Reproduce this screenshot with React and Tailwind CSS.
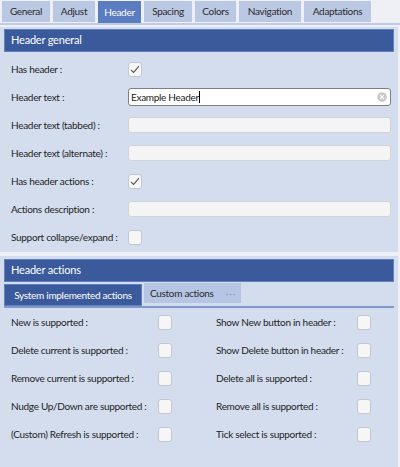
import React from 'react';

const tabs = [
  { label: 'General', w: 'w-[48px]' },
  { label: 'Adjust', w: 'w-[42px]' },
  { label: 'Header', w: 'w-[43px]', active: true },
  { label: 'Spacing', w: 'w-[48px]' },
  { label: 'Colors', w: 'w-[41px]' },
  { label: 'Navigation', w: 'w-[62px]' },
  { label: 'Adaptations', w: 'w-[67px]' },
];

function Check({ checked }) {
  return (
    <div className="w-[14px] h-[15px] rounded-[3px] border border-[#c3c7cf] bg-[#f6f6f6] flex items-center justify-center">
      {checked && (
        <svg width="10" height="9" viewBox="0 0 10 9" fill="none">
          <path d="M1 4.8 L3.6 7.4 L9 1.2" stroke="#555" strokeWidth="1.1" />
        </svg>
      )}
    </div>
  );
}

function Field({ value }) {
  if (value) {
    return (
      <div className="w-[263px] h-[18px] rounded-[3px] border border-[#7b7f87] bg-white flex items-center pl-[2px] pr-[3px]">
        <span className="text-[#222]">{value}</span>
        <span className="w-px h-[12px] bg-black" />
        <div className="flex-1" />
        <svg width="10" height="10" viewBox="0 0 10 10">
          <circle cx="5" cy="5" r="4.8" fill="#c9c9c9" />
          <path d="M3.2 3.2 L6.8 6.8 M6.8 3.2 L3.2 6.8" stroke="#fff" strokeWidth="1.1" />
        </svg>
      </div>
    );
  }
  return <div className="w-[263px] h-[16px] rounded-[3px] border border-[#d0d3da] bg-[#f4f4f4]" />;
}

function Bar({ title }) {
  return (
    <div className="mx-[4px] h-[23px] bg-[#3a5a9b] border border-[#5f7fbf] flex items-center pl-[6px] text-white text-[11px] tracking-[-0.2px]">
      {title}
    </div>
  );
}

const general = [
  { label: 'Has header :', type: 'check', checked: true },
  { label: 'Header text :', type: 'field', value: 'Example Header' },
  { label: 'Header text (tabbed) :', type: 'field' },
  { label: 'Header text (alternate) :', type: 'field' },
  { label: 'Has header actions :', type: 'check', checked: true },
  { label: 'Actions description :', type: 'field' },
  { label: 'Support collapse/expand :', type: 'check' },
];

const actions = [
  ['New is supported :', 'Show New button in header :'],
  ['Delete current is supported :', 'Show Delete button in header :'],
  ['Remove current is supported :', 'Delete all is supported :'],
  ['Nudge Up/Down are supported :', 'Remove all is supported :'],
  ['(Custom) Refresh is supported :', 'Tick select is supported :'],
];

export default function App() {
  return (
    <div className="w-[400px] h-[467px] overflow-hidden bg-[#eef0f6] text-[10px] tracking-[-0.3px] whitespace-nowrap text-[#1e1e1e] font-['Lato',sans-serif]">
      {/* top tabs */}
      <div className="h-[25px] flex items-end gap-[3px] pl-[2px] border-b-2 border-[#c0cce6]">
        {tabs.map(t => (
          <div
            key={t.label}
            className={
              t.active
                ? `${t.w} h-[22px] bg-[#5a7cc0] text-white flex items-center justify-center`
                : `${t.w} h-[21px] mb-[1px] bg-[#bac8e4] text-[#2a2a2a] flex items-center justify-center`
            }
          >
            {t.label}
          </div>
        ))}
      </div>

      {/* Header general */}
      <div className="mt-[2px] mr-[2px] h-[225px] bg-[#d3ddee] pt-[2px]">
        <Bar title="Header general" />
        <div className="mt-[3px] pl-[11px]">
          {general.map(r => (
            <div key={r.label} className="h-[28px] flex items-center">
              <div className="w-[117px]">{r.label}</div>
              {r.type === 'check' ? <Check checked={r.checked} /> : <Field value={r.value} />}
            </div>
          ))}
        </div>
      </div>

      {/* Header actions */}
      <div className="mt-[4px] mr-[2px] h-[211px] bg-[#d3ddee] pt-[3px]">
        <Bar title="Header actions" />
        <div className="mx-[4px] mt-[1px] h-[25px] flex items-end gap-[2px] border-b-2 border-[#7f98cc]">
          <div className="w-[138px] h-[22px] bg-[#3a5a9b] border border-[#5f7fbf] text-white flex items-center justify-center">
            System implemented actions
          </div>
          <div className="w-[97px] h-[20px] mb-[3px] bg-[#b5c5e3] flex items-center pl-[6px] gap-[12px] text-[#2a2a2a]">
            Custom actions
            <span className="text-[#8a97b5] tracking-[1px]">···</span>
          </div>
        </div>
        <div className="pl-[11px]">
          {actions.map(([a, b]) => (
            <div key={a} className="h-[28px] grid grid-cols-[147px_58px_141px_auto] items-center">
              <div>{a}</div>
              <Check />
              <div>{b}</div>
              <Check />
            </div>
          ))}
        </div>
      </div>
    </div>
  );
}
